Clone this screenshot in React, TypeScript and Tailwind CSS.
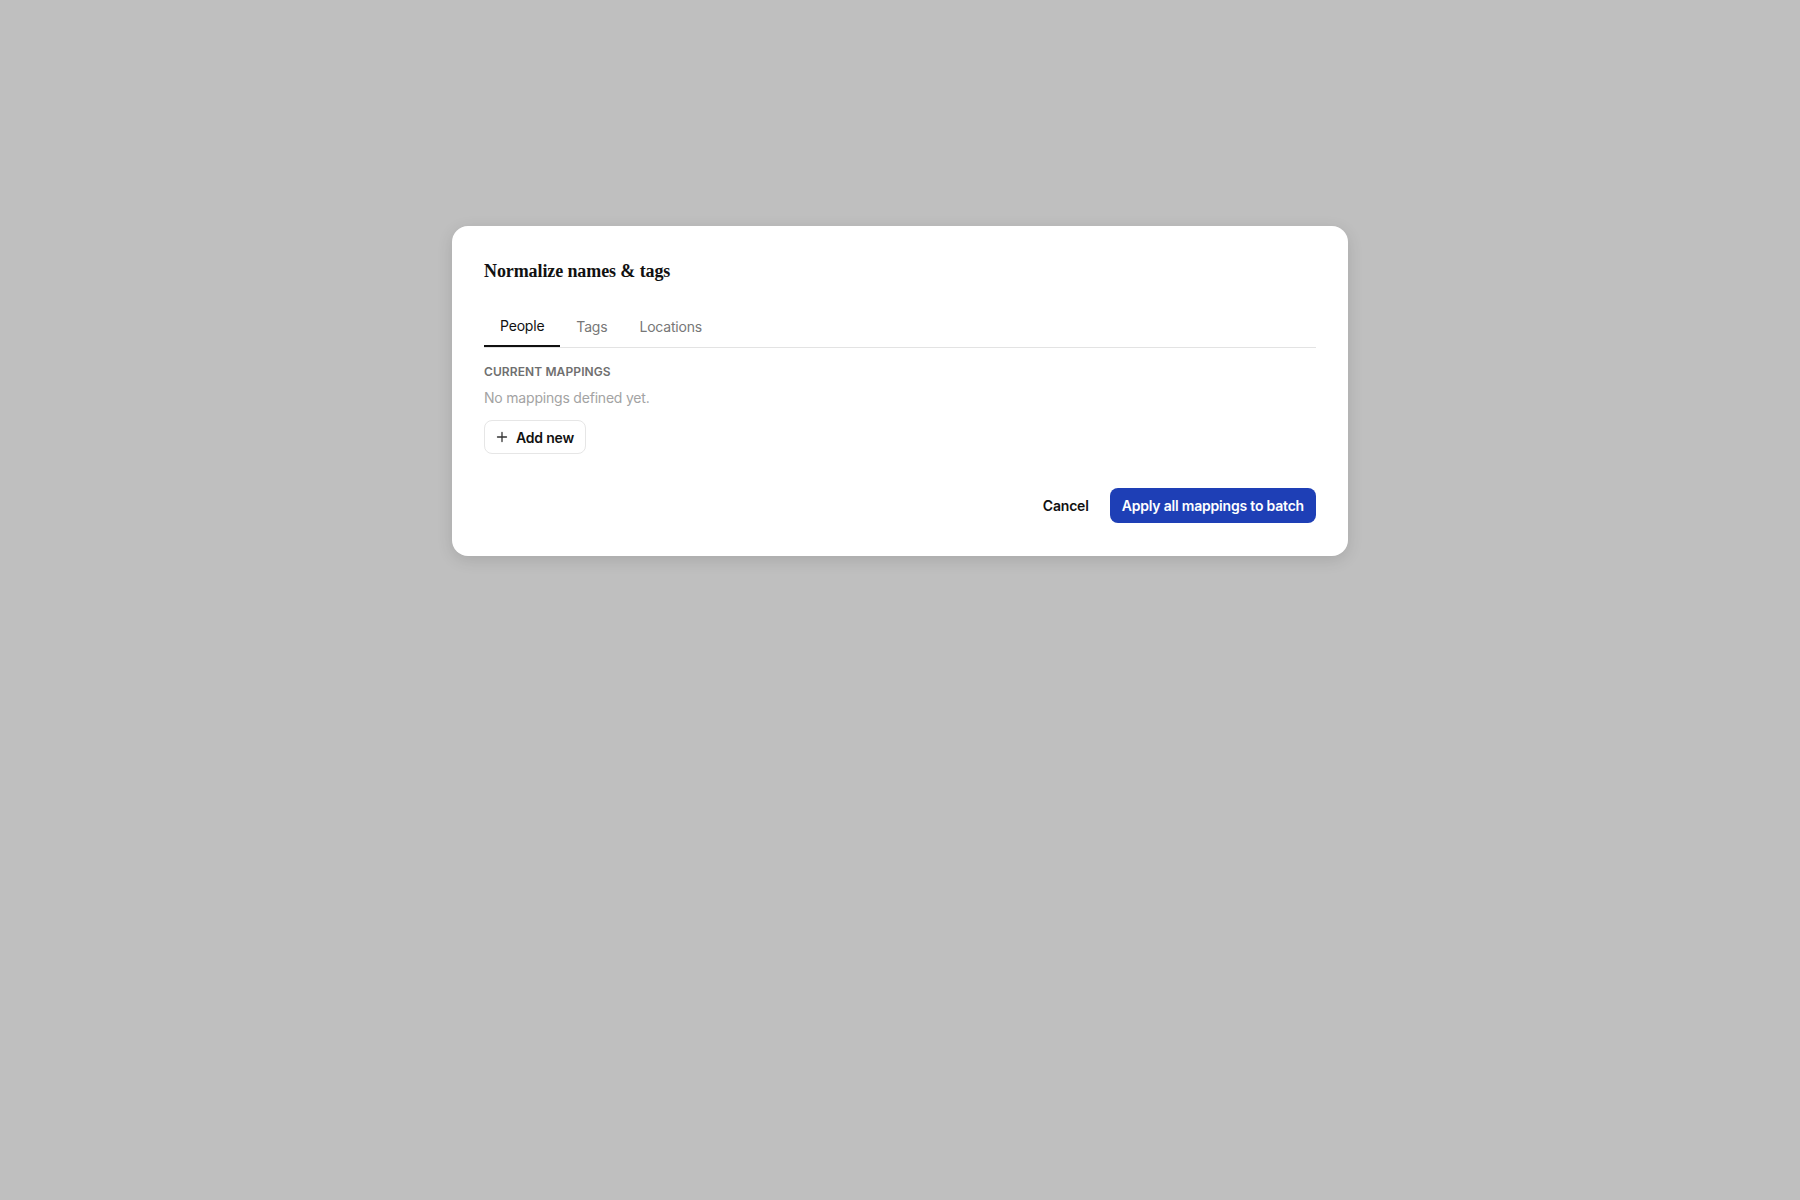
import React from "react";

export default function App() {
  return (
    <div className="min-h-screen w-full bg-[#bfbfbf] flex justify-center items-start pt-[226px] tracking-[-0.2px]" style={{ fontFamily: "Inter, 'Liberation Sans', sans-serif" }}>
      <div className="w-[896px] bg-white rounded-2xl shadow-[0_4px_16px_rgba(0,0,0,0.12)] px-8 pt-8 pb-[33px]">
        <h2 className="text-[18px] leading-[26px] font-bold text-[#111] tracking-[-0.1px]" style={{ fontFamily: "'Liberation Serif', 'DejaVu Serif', serif" }}>
          Normalize names &amp; tags
        </h2>
        <div className="mt-[23px] flex border-b border-[#e3e3e3]">
          <button className="px-4 h-[40px] pb-[2px] text-[14px] text-[#111] border-b-2 border-[#111] -mb-px">People</button>
          <button className="px-4 h-[40px] pb-[2px] text-[14px] text-[#777]">Tags</button>
          <button className="px-4 h-[40px] pb-[2px] text-[14px] text-[#777]">Locations</button>
        </div>
        <div className="mt-[17px] text-[12px] leading-[14px] font-semibold tracking-[0.1px] text-[#6f6f6f] uppercase">Current mappings</div>
        <div className="mt-[10px] text-[14px] leading-[18px] text-[#a3a3a3]">No mappings defined yet.</div>
        <button className="mt-[13px] h-[34px] px-[11px] flex items-center gap-[8px] border border-[#e6e6e6] rounded-lg text-[14px] font-semibold text-[#111]">
          <svg width="12" height="12" viewBox="0 0 12 12" fill="none" stroke="#333" strokeWidth="1.3" strokeLinecap="round">
            <path d="M6 1.5v9M1.5 6h9" />
          </svg>
          Add new
        </button>
        <div className="mt-[34px] flex justify-end items-center gap-[10px]">
          <button className="h-[35px] px-[11px] text-[14px] font-semibold text-[#111]">Cancel</button>
          <button className="h-[35px] px-[12px] rounded-lg bg-[#1e3fb6] text-white text-[14px] font-semibold">Apply all mappings to batch</button>
        </div>
      </div>
    </div>
  );
}
